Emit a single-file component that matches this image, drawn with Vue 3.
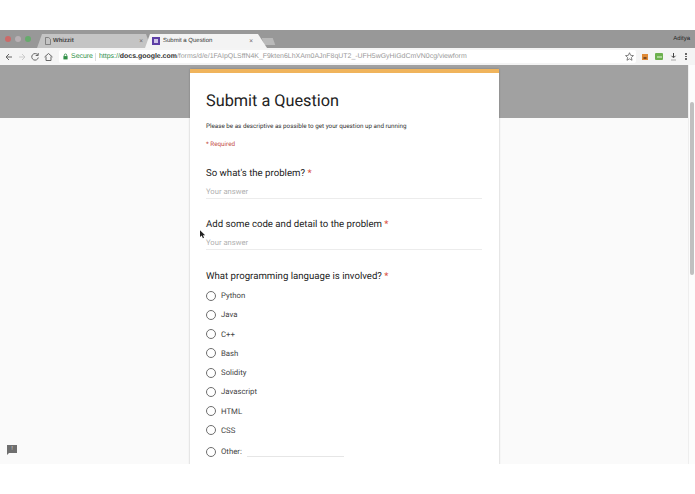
<template>
  <div class="frame">
    <div class="browser">
      <div class="tabbar">
        <div class="lights">
          <i class="light red"></i><i class="light grey"></i><i class="light green"></i>
        </div>
        <div class="tab">
          <svg class="doc" width="6" height="8" viewBox="0 0 6 8"><path d="M.5.500h3.200L5.500 2.300v5.200H.5z" fill="none" stroke="#666" stroke-width=".7"/></svg>
          <span class="tab-title bold">Whizzit</span>
          <span class="close">×</span>
        </div>
        <div class="tab active">
          <span class="form-icon"><i></i></span>
          <span class="tab-title">Submit a Question</span>
          <span class="close">×</span>
        </div>
        <div class="new-tab"></div>
        <span class="user">Aditya</span>
      </div>
      <div class="toolbar">
        <svg class="nav" width="58" height="12" viewBox="0 0 58 12" fill="none">
          <path d="M12 6H6M9 3L6 6l3 3" stroke="#666" stroke-width="1"/>
          <path d="M19 6h6M22 3l3 3-3 3" stroke="#ccc" stroke-width="1"/>
          <path d="M37.800 4a3.300 3.300 0 1 0 .5 2.500M38.200 2v2.500h-2.500" stroke="#666" stroke-width="1"/>
          <path d="M44.500 6l4-3.500 4 3.500M46 5.500V9.500h5V5.500" stroke="#666" stroke-width="1"/>
        </svg>
        <div class="omnibox">
          <svg width="5" height="7" viewBox="0 0 6 7"><rect x=".5" y="3" width="5" height="4" fill="#2f8f46"/><path d="M1.500 3V2a1.500 1.500 0 0 1 3 0v1" fill="none" stroke="#2f8f46"/></svg>
          <span class="secure">Secure</span>
          <span class="sep"></span>
          <span class="url"><span class="https">https://</span><b>docs.google.com</b>/forms/d/e/1FAIpQLSffN4K_F9kten6LhXAm0AJnF8qUT2_-UFH5wGyHiGdCmVN0cg/viewform</span>
          <svg class="star" width="9" height="9" viewBox="0 0 10 10"><path d="M5 .8l1.300 2.900 3.100.3-2.300 2.100.7 3.100L5 7.600 2.200 9.200l.7-3.100L.6 4l3.100-.3z" fill="none" stroke="#555" stroke-width=".8"/></svg>
        </div>
        <div class="extensions">
          <svg width="6" height="6" viewBox="0 0 6 6"><rect width="6" height="6" fill="#e08a35"/><rect y="3" x="1.500" width="3" height="2" fill="#7a4a22"/></svg>
          <span class="ext-green"><i></i></span>
          <svg width="7" height="8" viewBox="0 0 7 8"><path d="M3.500 0v4M1.500 2.800l2 2 2-2" stroke="#444" fill="none"/><path d="M1 7h5" stroke="#aaa"/></svg>
          <span class="dots"><i></i><i></i><i></i></span>
        </div>
      </div>
      <div class="page">
        <div class="content">
          <div class="band"></div>
          <div class="card">
            <h1>Submit a Question</h1>
            <p class="desc">Please be as descriptive as possible to get your question up and running</p>
            <p class="required">* Required</p>

            <div class="question first">
              <div class="q-title">So what's the problem? <span class="star-req">*</span></div>
              <div class="answer">Your answer</div>
            </div>
            <div class="question">
              <div class="q-title">Add some code and detail to the problem <span class="star-req">*</span></div>
              <div class="answer">Your answer</div>
            </div>
            <div class="question">
              <div class="q-title">What programming language is involved? <span class="star-req">*</span></div>
              <ul class="options">
                <li v-for="lang in languages" :key="lang">
                  <span class="radio"></span>
                  <span>{{ lang }}</span>
                </li>
                <li class="other">
                  <span class="radio"></span>
                  <span>Other:</span>
                  <span class="other-line"></span>
                </li>
              </ul>
            </div>
          </div>
          <svg class="cursor" width="6" height="9" viewBox="0 0 7 10"><path d="M0 0v8l2-1.800L3.400 9.500l1.300-.6-1.300-3H6z" fill="#222"/></svg>
          <span class="feedback">!</span>
        </div>
        <div class="scrollbar"><div class="thumb"></div></div>
      </div>
    </div>
  </div>
</template>

<script setup>
const languages = ['Python', 'Java', 'C++', 'Bash', 'Solidity', 'Javascript', 'HTML', 'CSS']
</script>

<style>
html, body { margin: 0; background: #fff; }
</style>

<style scoped>
.frame {
  width: 695px;
  height: 494px;
  padding-top: 30px;
  box-sizing: border-box;
  background: #fff;
  overflow: hidden;
  font-family: Roboto, "Liberation Sans", sans-serif;
  text-rendering: geometricPrecision;
}
.browser {
  height: 434px;
  display: flex;
  flex-direction: column;
  overflow: hidden;
}
.tabbar {
  height: 18px;
  flex: none;
  background: #989898;
  display: flex;
  align-items: flex-end;
  padding-left: 5px;
  font-size: 6px;
  color: #333;
}
.lights {
  display: flex;
  gap: 4px;
  align-self: center;
  margin-right: 6px;
}
.light { width: 6px; height: 6px; border-radius: 50%; }
.red { background: #cc6a68; }
.grey { background: #b8b0b4; }
.green { background: #66aa6c; }
.tab {
  width: 114px;
  height: 14px;
  flex: none;
  box-sizing: border-box;
  padding: 0 8px 0 8px;
  background: #c4c4c4;
  display: flex;
  align-items: center;
  gap: 2px;
  clip-path: polygon(0 100%, 5px 0, calc(100% - 5px) 0, 100% 100%);
}
.tab.active {
  position: relative;
  z-index: 1;
  width: 122px;
  margin-left: -6px;
  padding: 0 14px 0 7px;
  gap: 3px;
  background: #f3f3f3;
  clip-path: polygon(0 100%, 5px 0, calc(100% - 9px) 0, 100% 100%);
}
.tab-title { flex: 1; font-family: "Liberation Sans", sans-serif; color: #333; }
.tab-title.bold { font-weight: 700; color: #444; }
.close { color: #666; font-size: 7px; }
.form-icon {
  width: 8px;
  height: 8px;
  flex: none;
  background: #5d3fa6;
  display: flex;
  align-items: center;
  justify-content: center;
}
.form-icon i { width: 4px; height: 4px; background: #cfc4e8; }
.new-tab {
  width: 11px;
  height: 7px;
  margin-left: -4.500px;
  margin-bottom: 3px;
  background: #b9b9b9;
  transform: skewX(20deg);
}
.user {
  margin-left: auto;
  align-self: center;
  margin-right: 5px;
  font-family: "Liberation Sans", sans-serif;
  font-size: 6px;
  color: #222;
}
.toolbar {
  height: 17px;
  flex: none;
  background: #f4f4f4;
  display: flex;
  align-items: center;
  box-sizing: border-box;
}
.nav { flex: none; }
.omnibox {
  width: 577px;
  height: 13px;
  flex: none;
  margin-left: 1px;
  padding: 0 2px 0 4px;
  box-sizing: border-box;
  background: #fff;
  border-radius: 2px;
  display: flex;
  align-items: center;
  font-family: "Liberation Sans", sans-serif;
  font-size: 6.950px;
  white-space: nowrap;
  color: #999;
}
.secure { color: #2f8f46; margin-left: 3px; }
.sep { width: 1px; height: 8px; background: #ddd; margin: 0 2.500px; }
.https { color: #2f8f46; }
.url { flex: 1; overflow: hidden; }
.url b { color: #333; font-weight: 700; }
.extensions {
  display: flex;
  align-items: center;
  gap: 7px;
  margin-left: 6px;
}
.ext-green {
  width: 8px;
  height: 7px;
  background: #6cb04e;
  border-radius: 1px;
  display: flex;
  align-items: center;
  justify-content: center;
}
.ext-green i { width: 5px; height: 2px; background: #a9d494; }
.dots { display: flex; flex-direction: column; gap: 1px; margin-left: 1px; }
.dots i { width: 1.500px; height: 1.500px; background: #666; }
.page {
  flex: 1;
  min-height: 0;
  display: flex;
  background: #fafafa;
}
.content {
  position: relative;
  flex: 1;
  min-width: 0;
  overflow: hidden;
}
.band {
  position: absolute;
  left: 0;
  right: 0;
  top: 0;
  height: 53px;
  background: #a1a1a1;
}
.card {
  position: relative;
  width: 309px;
  margin: 4px 0 0 190px;
  height: 500px;
  box-sizing: border-box;
  padding: 16.500px 17px 0 16px;
  background: #fff;
  border-top: 4px solid #f0b45c;
  box-shadow: 0 0 2px rgba(0, 0, 0, .25);
  color: #222;
}
h1 {
  margin: 0;
  font-size: 16.300px;
  font-weight: 400;
  line-height: 22px;
}
.desc {
  margin: 10px 0 0;
  font-size: 6.270px;
  line-height: 9px;
  color: #333;
}
.required {
  margin: 9.500px 0 0;
  font-size: 6.300px;
  line-height: 9px;
  color: #c5504a;
}
.question { margin-top: 19.750px; }
.question.first { margin-top: 17.500px; }
.q-title {
  font-size: 9.650px;
  line-height: 13px;
  color: #222;
}
.star-req { color: #d9503f; }
.answer {
  margin-top: 6px;
  height: 12px;
  line-height: 12px;
  font-size: 7.650px;
  color: #b0b0b0;
  border-bottom: 1px solid #ececec;
}
.options {
  list-style: none;
  margin: 7.500px 0 0;
  padding: 0;
  display: flex;
  flex-direction: column;
  gap: 9.250px;
}
.options li {
  height: 10px;
  display: flex;
  align-items: center;
  font-size: 7.800px;
  color: #444;
}
.radio {
  width: 8px;
  height: 8px;
  flex: none;
  border: 1px solid #6e6e6e;
  border-radius: 50%;
  margin-right: 5px;
}
.other { margin-top: 2px; }
.other-line {
  width: 97px;
  height: 9px;
  margin-left: 5px;
  border-bottom: 1px solid #e6e6e6;
}
.cursor { position: absolute; left: 200px; top: 165px; }
.feedback {
  position: absolute;
  left: 7px;
  top: 380px;
  width: 10px;
  height: 8px;
  background: #6f6f6f;
  color: #ddd;
  font-family: "Liberation Sans", sans-serif;
  font-size: 6px;
  line-height: 8px;
  text-align: center;
}
.feedback::after {
  content: "";
  position: absolute;
  left: 0;
  top: 8px;
  border-top: 2px solid #6f6f6f;
  border-right: 2px solid transparent;
}
.scrollbar {
  width: 7px;
  flex: none;
  background: #fcfcfc;
  border-left: 1px solid #eee;
  box-sizing: border-box;
}
.thumb {
  width: 4px;
  height: 173px;
  margin: 37px 0 0 1px;
  background: #c0c0c0;
  border-radius: 2px;
}
</style>
